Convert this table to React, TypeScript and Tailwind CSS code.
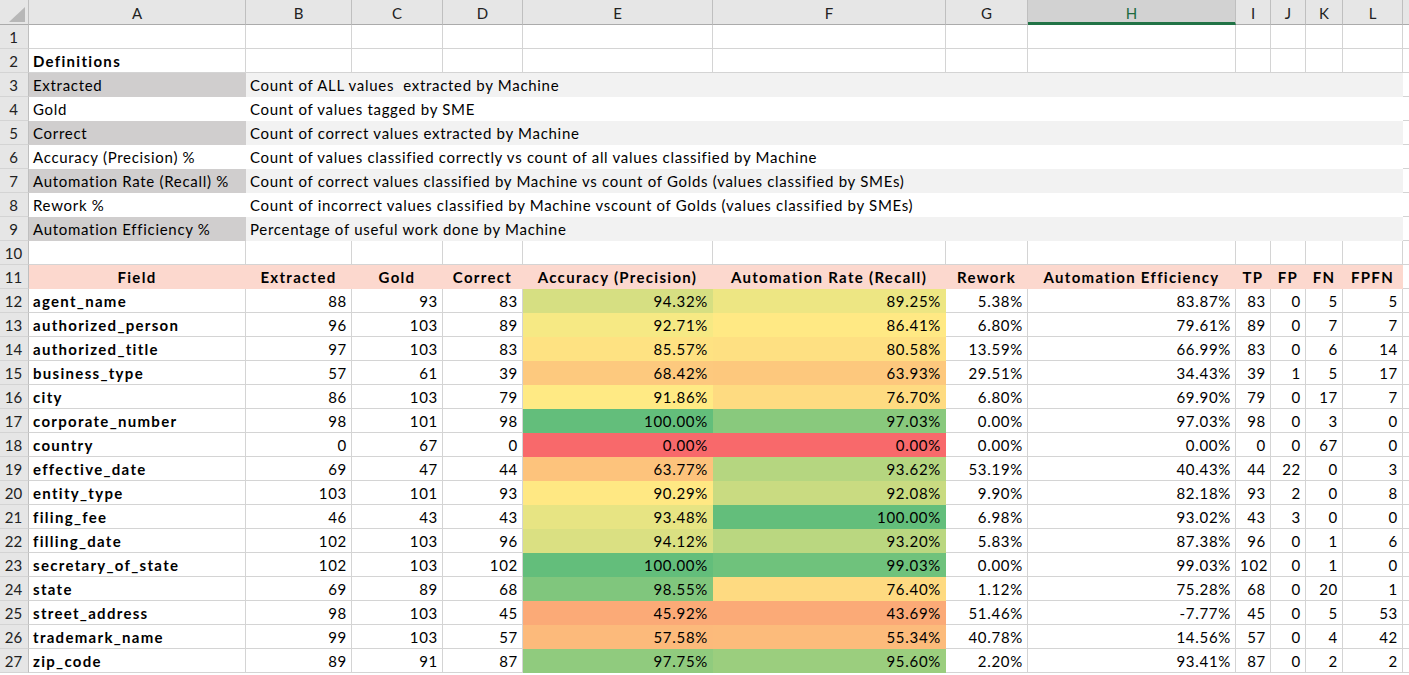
import React from "react";

type Row = [string, number, number, number, number, number, number, number, number, number, number, number];

const rows: Row[] = [
  ["agent_name", 88, 93, 83, 94.32, 89.25, 5.38, 83.87, 83, 0, 5, 5],
  ["authorized_person", 96, 103, 89, 92.71, 86.41, 6.8, 79.61, 89, 0, 7, 7],
  ["authorized_title", 97, 103, 83, 85.57, 80.58, 13.59, 66.99, 83, 0, 6, 14],
  ["business_type", 57, 61, 39, 68.42, 63.93, 29.51, 34.43, 39, 1, 5, 17],
  ["city", 86, 103, 79, 91.86, 76.7, 6.8, 69.9, 79, 0, 17, 7],
  ["corporate_number", 98, 101, 98, 100, 97.03, 0, 97.03, 98, 0, 3, 0],
  ["country", 0, 67, 0, 0, 0, 0, 0, 0, 0, 67, 0],
  ["effective_date", 69, 47, 44, 63.77, 93.62, 53.19, 40.43, 44, 22, 0, 3],
  ["entity_type", 103, 101, 93, 90.29, 92.08, 9.9, 82.18, 93, 2, 0, 8],
  ["filing_fee", 46, 43, 43, 93.48, 100, 6.98, 93.02, 43, 3, 0, 0],
  ["filling_date", 102, 103, 96, 94.12, 93.2, 5.83, 87.38, 96, 0, 1, 6],
  ["secretary_of_state", 102, 103, 102, 100, 99.03, 0, 99.03, 102, 0, 1, 0],
  ["state", 69, 89, 68, 98.55, 76.4, 1.12, 75.28, 68, 0, 20, 1],
  ["street_address", 98, 103, 45, 45.92, 43.69, 51.46, -7.77, 45, 0, 5, 53],
  ["trademark_name", 99, 103, 57, 57.58, 55.34, 40.78, 14.56, 57, 0, 4, 42],
  ["zip_code", 89, 91, 87, 97.75, 95.6, 2.2, 93.41, 87, 0, 2, 2],
];

const defs: [string, string][] = [
  ["Extracted", "Count of ALL values  extracted by Machine"],
  ["Gold", "Count of values tagged by SME"],
  ["Correct", "Count of correct values extracted by Machine"],
  ["Accuracy (Precision) %", "Count of values classified correctly vs count of all values classified by Machine"],
  ["Automation Rate (Recall) %", "Count of correct values classified by Machine vs count of Golds (values classified by SMEs)"],
  ["Rework %", "Count of incorrect values classified by Machine vscount of Golds (values classified by SMEs)"],
  ["Automation Efficiency %", "Percentage of useful work done by Machine"],
];

const RED = [248, 105, 107];
const YEL = [255, 235, 132];
const GRN = [99, 190, 123];

function percentile50(vals: number[]) {
  const s = [...vals].sort((a, b) => a - b);
  const pos = (s.length - 1) * 0.5;
  const lo = Math.floor(pos);
  const hi = Math.ceil(pos);
  return s[lo] + (s[hi] - s[lo]) * (pos - lo);
}

function mix(a: number[], b: number[], t: number) {
  const c = a.map((v, i) => Math.round(v + (b[i] - v) * t));
  return `rgb(${c[0]},${c[1]},${c[2]})`;
}

function scaleColor(v: number, vals: number[]) {
  const min = Math.min(...vals);
  const max = Math.max(...vals);
  const mid = percentile50(vals);
  if (v <= mid) return mix(RED, YEL, mid === min ? 1 : (v - min) / (mid - min));
  return mix(YEL, GRN, max === mid ? 1 : (v - mid) / (max - mid));
}

const precVals = rows.map((r) => r[4]);
const recVals = rows.map((r) => r[5]);

const GRID =
  "grid grid-cols-[29px_217px_106px_91px_80px_190px_233px_82px_208px_35px_35px_37px_60px_1fr]";

const cell =
  "border-r border-b border-[#d4d4d4] px-[4px] pt-[1px] whitespace-nowrap leading-[23px] h-[24px] tracking-[0.7px]";
const cellFill =
  "border-r border-b border-transparent px-[4px] pt-[1px] whitespace-nowrap leading-[23px] h-[24px] tracking-[0.7px]";
const bold = "font-bold tracking-[1.3px]";

function RowHead({ n }: { n: number }) {
  return (
    <div className="h-[24px] bg-[#e6e6e6] border-r border-b border-r-[#bfbfbf] border-b-[#d4d4d4] text-center pt-[1px] leading-[23px] text-[#222] pr-[1px]">
      {n}
    </div>
  );
}

function EmptyRow({ n }: { n: number }) {
  return (
    <div className={GRID}>
      <RowHead n={n} />
      {Array.from({ length: 12 }).map((_, i) => (
        <div key={i} className={cell} />
      ))}
      <div className={cell} />
    </div>
  );
}

const pct = (v: number) => `${v.toFixed(2)}%`;

export default function App() {
  const letters = ["A", "B", "C", "D", "E", "F", "G", "H", "I", "J", "K", "L"];
  return (
    <div className="w-[1409px] h-[675px] overflow-hidden bg-white text-black text-[15px] font-['Lato',_sans-serif]">
      {/* Column header */}
      <div className={`${GRID} h-[25px]`}>
        <div className="relative h-[25px] bg-[#e6e6e6] border-r border-b border-r-[#bfbfbf] border-b-[#ababab]">
          <svg className="absolute left-[9px] top-[7px]" width="16" height="15" viewBox="0 0 16 15">
            <polygon points="16,0 16,15 0,15" fill="#b7b7b7" />
          </svg>
        </div>
        {letters.map((l) =>
          l === "H" ? (
            <div
              key={l}
              className="h-[25px] bg-[#d2d2d2] border-r border-r-[#bfbfbf] border-b-[3px] border-b-[#217346] text-center pt-[2px] leading-[22px] text-[#1e6b41]"
            >
              {l}
            </div>
          ) : (
            <div
              key={l}
              className="h-[25px] bg-[#e6e6e6] border-r border-b border-r-[#bfbfbf] border-b-[#ababab] text-center pt-[2px] leading-[22px] text-[#222]"
            >
              {l}
            </div>
          )
        )}
        <div className="h-[25px] bg-[#e6e6e6] border-b border-b-[#ababab]" />
      </div>

      <EmptyRow n={1} />

      {/* Row 2 */}
      <div className={GRID}>
        <RowHead n={2} />
        <div className={`${cell} ${bold}`}>Definitions</div>
        {Array.from({ length: 11 }).map((_, i) => (
          <div key={i} className={cell} />
        ))}
        <div className={cell} />
      </div>

      {defs.map(([k, v], i) => {
        const shaded = i % 2 === 0;
        return (
          <div key={k} className={GRID}>
            <RowHead n={i + 3} />
            <div className={`${cellFill} ${shaded ? "bg-[#d0cece]" : "bg-white"}`}>{k}</div>
            <div className={`${cellFill} col-span-11 whitespace-pre ${shaded ? "bg-[#f2f2f2]" : "bg-white"}`}>{v}</div>
            <div className={cell} />
          </div>
        );
      })}

      <EmptyRow n={10} />

      {/* Row 11 header */}
      <div className={GRID}>
        <RowHead n={11} />
        {[
          "Field",
          "Extracted",
          "Gold",
          "Correct",
          "Accuracy (Precision)",
          "Automation Rate (Recall)",
          "Rework",
          "Automation Efficiency",
          "TP",
          "FP",
          "FN",
          "FPFN",
        ].map((h) => (
          <div key={h} className={`${cellFill} bg-[#fcd8ce] ${bold} text-center px-0`}>
            {h}
          </div>
        ))}
        <div className={cell} />
      </div>

      {rows.map((r, i) => (
        <div key={r[0]} className={GRID}>
          <RowHead n={i + 12} />
          <div className={`${cell} ${bold}`}>{r[0]}</div>
          <div className={`${cell} text-right`}>{r[1]}</div>
          <div className={`${cell} text-right`}>{r[2]}</div>
          <div className={`${cell} text-right`}>{r[3]}</div>
          <div className={`${cellFill} text-right`} style={{ backgroundColor: scaleColor(r[4], precVals) }}>
            {pct(r[4])}
          </div>
          <div className={`${cellFill} text-right`} style={{ backgroundColor: scaleColor(r[5], recVals) }}>
            {pct(r[5])}
          </div>
          <div className={`${cell} text-right`}>{pct(r[6])}</div>
          <div className={`${cell} text-right`}>{pct(r[7])}</div>
          <div className={`${cell} text-right px-[3px]`}>{r[8]}</div>
          <div className={`${cell} text-right`}>{r[9]}</div>
          <div className={`${cell} text-right`}>{r[10]}</div>
          <div className={`${cell} text-right`}>{r[11]}</div>
          <div className={cell} />
        </div>
      ))}
    </div>
  );
}
